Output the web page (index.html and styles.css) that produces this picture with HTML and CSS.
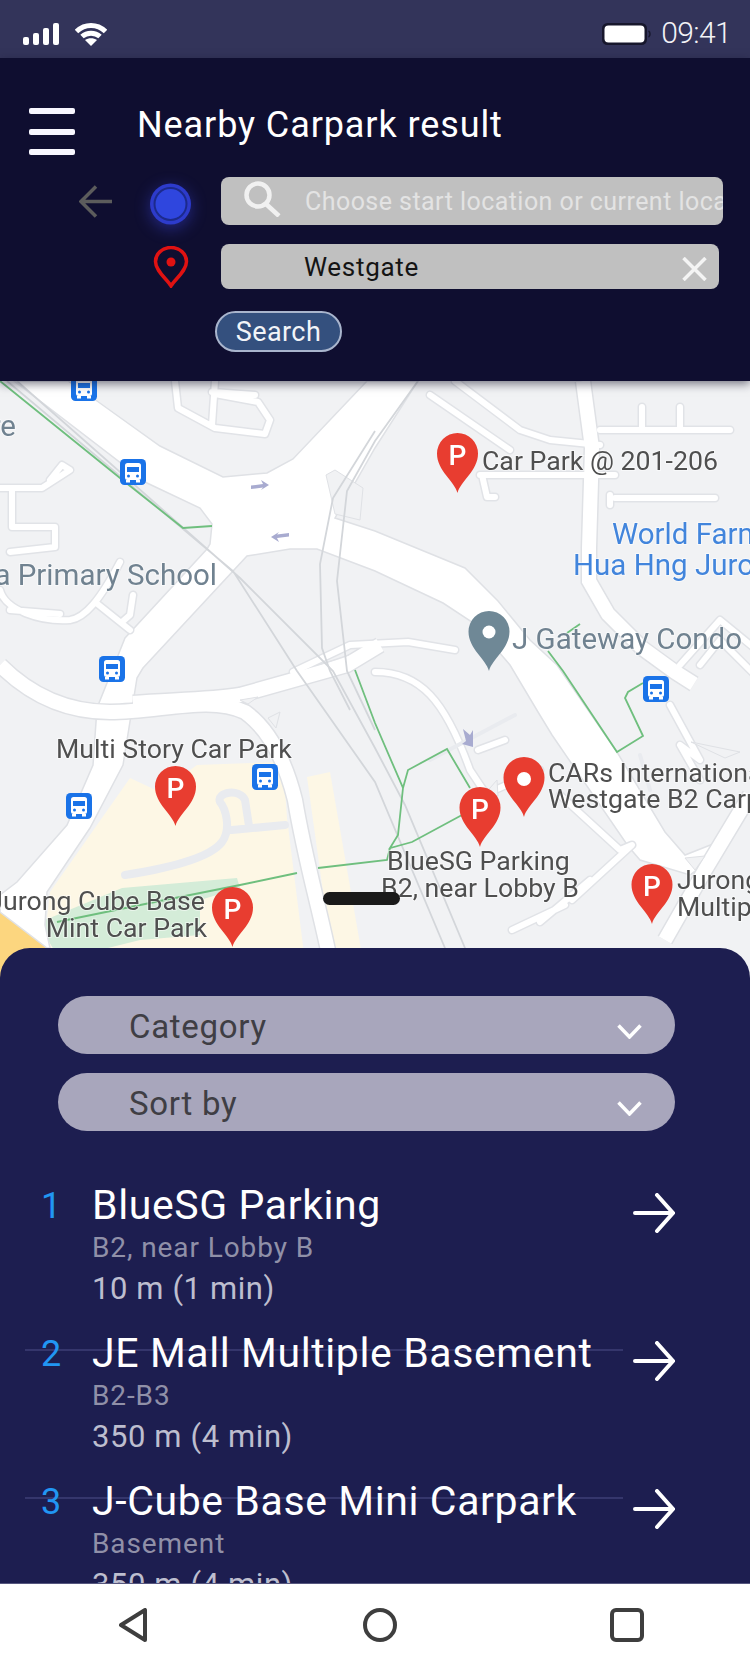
FILE: index.html
```html
<!DOCTYPE html>
<html lang="en">
<head>
<meta charset="utf-8">
<title>Nearby Carpark result</title>
<link rel="stylesheet" href="styles.css">
</head>
<body>
<div class="phone">
  <div class="status">
    <div class="status-left">
      <svg class="signal" width="36" height="22" viewBox="0 0 36 22"><rect x="0" y="14" width="6" height="8" rx="2"/><rect x="10" y="10" width="6" height="12" rx="2"/><rect x="20" y="5" width="6" height="17" rx="2"/><rect x="30" y="0" width="6" height="22" rx="2"/></svg>
      <svg class="wifi" width="32" height="23" viewBox="0 0 32 23"><path class="wifi-arc" d="M1.500 8.500C10 0.500 22 0.500 30.500 8.500"/><path class="wifi-arc" d="M7 13.500C12 9 20 9 25 13.500"/><path class="wifi-tip" d="M16 23L10 17C13.500 14.500 18.500 14.500 22 17Z"/></svg>
    </div>
    <div class="status-right">
      <svg class="battery" width="49" height="22" viewBox="0 0 49 22"><rect x="0" y="0" width="45" height="22" rx="5.500" class="batt-shell"/><rect x="2.500" y="2.500" width="40" height="17" rx="4" class="batt-level"/><path class="batt-nub" d="M46.500 8C48.500 9 48.500 13 46.500 14"/></svg>
      <span class="time">09:41</span>
    </div>
  </div>

  <header class="header">
    <div class="title-row">
      <div class="burger"><span></span><span></span><span></span></div>
      <h1 class="title">Nearby Carpark result</h1>
    </div>
    <div class="route-row route-row-start">
      <div class="back-cell">
        <svg width="34" height="33" viewBox="0 0 34 33"><path class="back-arrow" d="M33 16.500H3M17 1.500L2 16.500L17 31.500"/></svg>
      </div>
      <div class="marker-cell">
        <svg class="dot" width="41" height="42" viewBox="0 0 41 42"><circle cx="20.500" cy="21" r="20.500" class="dot-outer"/><circle cx="20.500" cy="21" r="17" class="dot-ring"/><circle cx="20.500" cy="21" r="15" class="dot-inner"/></svg>
      </div>
      <div class="field field-start">
        <svg class="mag" width="37" height="36" viewBox="0 0 37 36"><circle cx="14" cy="14" r="11.500"/><path d="M22 23L35 35"/></svg>
        <span class="placeholder">Choose start location or current location</span>
      </div>
    </div>
    <div class="route-row route-row-end">
      <div class="back-cell"></div>
      <div class="marker-cell">
        <svg class="pin-out" width="36" height="42" viewBox="0 0 36 42"><path class="pin-line" d="M18 40C14 33 2.500 25 2.500 15.500A15.500 14 0 0 1 33.500 15.500C33.500 25 22 33 18 40Z"/><circle cx="18" cy="16" r="4.500" class="pin-dot"/></svg>
      </div>
      <div class="field field-end">
        <span class="value">Westgate</span>
        <svg class="clear" width="25" height="24" viewBox="0 0 25 24"><path d="M1.500 1L23.500 23M23.500 1L1.500 23"/></svg>
      </div>
    </div>
    <div class="search-row"><button class="search-btn">Search</button></div>
  </header>

  <section class="map">
    <svg class="map-svg" width="750" height="597" viewBox="0 381 750 597">
      <defs>
        <g id="bus">
          <rect x="-13" y="-13" width="26" height="26" rx="4.500" class="bus-bg"/>
          <rect x="-8" y="-9" width="16" height="17" rx="2.500" class="bus-body"/>
          <rect x="-6" y="-5" width="12" height="5" class="bus-glass"/>
          <rect x="-7" y="8" width="4" height="2.500" class="bus-body"/>
          <rect x="3" y="8" width="4" height="2.500" class="bus-body"/>
          <circle cx="-4.500" cy="4" r="1.500" class="bus-glass"/>
          <circle cx="4.500" cy="4" r="1.500" class="bus-glass"/>
        </g>
        <path id="pin" d="M0 60C-3 48 -20.500 38 -20.500 20.500A20.500 20.500 0 1 1 20.500 20.500C20.500 38 3 48 0 60Z"/>
        <path id="dir" d="M-9 1.500L3 0L1 -4L9 1L1 6L3 3.500L-9 5Z"/>
        <g id="wide">
          <path d="M583 381L585 396L592 448L589 548L589 581L608 614L642 648L675 672L694 684"/>
          <path d="M0 665C25 690 60 712 110 712C160 712 210 695 245 712C270 730 285 760 295 800C305 860 320 910 330 960"/>
          <path d="M133 703C170 700 210 700 240 695L347 665L380 645"/>
          <path d="M750 795L705 870L665 940"/>
        </g>
        <g id="thin">
          <path d="M175 381L178 408L215 428L265 434L270 420L258 402L215 394M215 381L212 425M212 392L255 395"/>
          <path d="M0 488H42L70 470L62 465L50 480"/>
          <path d="M12 490V527H55V547L10 552M0 590C5 610 40 622 70 620C85 618 100 600 120 562M95 602L130 630M133 595L130 615L122 622M10 610L60 614"/>
          <path d="M293 672L350 645L408 642L455 650M310 672L352 658"/>
          <path d="M455 381L520 430L550 440L600 445M430 395L510 450"/>
          <path d="M600 430H730M642 407V430M680 407V430M615 498H715M480 475H615M482 475L487 497H495M610 495L610 505"/>
          <path d="M375 672C420 672 445 700 470 770L490 800M495 790L540 770M478 750L505 740"/>
          <path d="M680 665L720 620L775 665M700 665L720 640L760 680M560 795L620 850L632 845L572 900M590 880L540 922M512 930L565 905"/>
          <path d="M670 705L700 760L680 745L700 780"/>
        </g>
      </defs>

      <rect x="0" y="381" width="750" height="597" class="map-ground"/>
      <polygon class="campus" points="130,778 160,792 197,765 283,762 287,818 297,898 307,978 40,978 50,892"/>
      <polygon class="campus" points="307,777 330,772 366,978 335,978"/>
      <polygon class="park" points="45,920 122,888 237,878 240,888 200,900 200,935 140,940 60,960 45,935"/>
      <polygon class="sand" points="0,912 47,948 47,978 0,978"/>

      <polygon class="road-main" points="68,381 97,401 160,446 223,477 267,473 293,459 367,381 418,381 375,448 335,518 375,531 465,568 498,601 530,640 557,665 617,752 665,832 685,855 718,842 722,850 690,875 640,860 628,846 552,735 538,712 510,665 475,624 443,603 375,571 317,549 290,549 247,556 143,668 137,678 123,765 90,828 47,892 45,925 50,948 47,948 0,912 0,895 17,882 67,825 93,765 97,708 125,638 207,549 210,544 212,524 200,508 147,483 14,381"/>

      <use href="#wide" class="road-wide-edge"/>
      <use href="#thin" class="road-thin-edge"/>
      <use href="#wide" class="road-wide-fill"/>
      <use href="#thin" class="road-thin-fill"/>

      <polygon class="islet" points="326,475 335,470 363,488 360,520 335,514"/>
      <polygon class="islet" points="240,700 258,697 248,704"/>
      <polygon class="islet" points="268,718 280,712 276,728"/>
      <polygon class="islet" points="483,796 497,780 498,796"/>
      <polygon class="islet" points="691,742 740,752 725,758"/>
      <polygon class="islet" points="685,858 705,856 695,870"/>

      <path class="lane" d="M125 875C170 868 210 858 222 842C232 828 225 808 220 802C216 792 240 788 245 800L249 826M232 830L285 825"/>
      <path class="lane lane-small" d="M430 760L515 715M640 755L650 790"/>

      <path class="rail" d="M7 381L233 571L297 671L375 782L450 960M17 381L240 578L333 671L375 748L405 805L470 960"/>
      <path class="rail" d="M375 431L333 498L320 564L322 648L330 671L350 710M418 381L375 441L347 491L337 581L347 671L375 730"/>

      <path class="trail" d="M0 381L120 478L183 528L212 526"/>
      <path class="trail" d="M567 633L580 624M548 651L563 671L617 752L643 736L625 698L628 692L643 683"/>
      <path class="trail" d="M355 670L375 723L403 788L398 835L390 848L412 842L462 815M403 788L408 770L447 749L470 788"/>
      <path class="trail" d="M390 848L387 860L318 868M297 873L240 885L150 903L57 922"/>

      <use href="#dir" x="260" y="484" class="dir"/>
      <use href="#dir" x="280" y="538" transform="rotate(180 280 538)" class="dir"/>
      <path class="dir" d="M463 729L470 735L473 730L473 747L462 744L466 741Z"/>

      <text class="label label-gray" x="16" y="436" text-anchor="end">re</text>
      <text class="label label-gray" x="217" y="585" text-anchor="end">a Primary School</text>
      <text class="label label-blue" x="612" y="544">World Farm</text>
      <text class="label label-blue" x="573" y="575">Hua Hng Jurong</text>
      <text class="label label-gray" x="512" y="649">J Gateway Condo</text>
      <text class="label" x="482" y="470">Car Park @ 201-206</text>
      <text class="label" x="56" y="758">Multi Story Car Park</text>
      <text class="label" x="205" y="910" text-anchor="end">Jurong Cube Base</text>
      <text class="label" x="207" y="937" text-anchor="end">Mint Car Park</text>
      <text class="label" x="548" y="782">CARs International</text>
      <text class="label" x="548" y="808">Westgate B2 Carpark</text>
      <text class="label" x="387" y="870">BlueSG Parking</text>
      <text class="label" x="381" y="897">B2, near Lobby B</text>
      <text class="label" x="677" y="889">Jurong Mall</text>
      <text class="label" x="677" y="916">Multiple Basement</text>

      <use href="#bus" x="84" y="388"/>
      <use href="#bus" x="133" y="472"/>
      <use href="#bus" x="112" y="669"/>
      <use href="#bus" x="79" y="806"/>
      <use href="#bus" x="265" y="777"/>
      <use href="#bus" x="656" y="689"/>

      <use href="#pin" x="489" y="611" class="pin-gray"/>
      <circle cx="489" cy="632" r="6.500" class="pin-hole"/>
      <use href="#pin" x="457.500" y="433" class="pin-red"/>
      <text class="pin-p" x="457.500" y="465" text-anchor="middle">P</text>
      <use href="#pin" x="175.500" y="766" class="pin-red"/>
      <text class="pin-p" x="175.500" y="798" text-anchor="middle">P</text>
      <use href="#pin" x="232.500" y="887" class="pin-red"/>
      <text class="pin-p" x="232.500" y="919" text-anchor="middle">P</text>
      <use href="#pin" x="524" y="757" class="pin-red"/>
      <circle cx="524" cy="779" r="7" class="pin-hole"/>
      <use href="#pin" x="480" y="787" class="pin-red"/>
      <text class="pin-p" x="480" y="819" text-anchor="middle">P</text>
      <use href="#pin" x="652" y="864" class="pin-red"/>
      <text class="pin-p" x="652" y="896" text-anchor="middle">P</text>
    </svg>
    <div class="handle"></div>
  </section>

  <section class="panel">
    <div class="selects">
      <div class="select"><span>Category</span><svg width="25" height="15" viewBox="0 0 25 15"><path class="chev" d="M1.500 1.500L12.500 13L23.500 1.500"/></svg></div>
      <div class="select"><span>Sort by</span><svg width="25" height="15" viewBox="0 0 25 15"><path class="chev" d="M1.500 1.500L12.500 13L23.500 1.500"/></svg></div>
    </div>
    <div class="results">
      <article class="result">
        <div class="rank">1</div>
        <div class="info">
          <div class="name">BlueSG Parking</div>
          <div class="where">B2, near Lobby B</div>
          <div class="dist">10 m (1 min)</div>
        </div>
        <svg class="go" width="42" height="40" viewBox="0 0 42 40"><path d="M2 20H39M24 2L40 20L24 38"/></svg>
      </article>
      <article class="result result-ruled">
        <div class="rank">2</div>
        <div class="info">
          <div class="name">JE Mall Multiple Basement</div>
          <div class="where">B2-B3</div>
          <div class="dist">350 m (4 min)</div>
        </div>
        <svg class="go" width="42" height="40" viewBox="0 0 42 40"><path d="M2 20H39M24 2L40 20L24 38"/></svg>
      </article>
      <article class="result result-ruled">
        <div class="rank">3</div>
        <div class="info">
          <div class="name">J-Cube Base Mini Carpark</div>
          <div class="where">Basement</div>
          <div class="dist">350 m (4 min)</div>
        </div>
        <svg class="go" width="42" height="40" viewBox="0 0 42 40"><path d="M2 20H39M24 2L40 20L24 38"/></svg>
      </article>
    </div>
  </section>

  <nav class="softkeys">
    <div class="softkey"><svg width="28" height="34" viewBox="0 0 28 34"><path d="M26 2V32L2 17Z"/></svg></div>
    <div class="softkey"><svg width="34" height="34" viewBox="0 0 34 34"><circle cx="17" cy="17" r="15"/></svg></div>
    <div class="softkey"><svg width="34" height="34" viewBox="0 0 34 34"><rect x="2" y="2" width="30" height="30" rx="4"/></svg></div>
  </nav>
</div>
</body>
</html>
```

FILE: styles.css
```css
* { box-sizing: border-box; }
html, body { margin: 0; padding: 0; }
body { width: 750px; height: 1667px; overflow: hidden; font-family: Roboto, "Noto Sans", sans-serif; background: #fff; }
.phone { width: 750px; height: 1667px; display: flex; flex-direction: column; overflow: hidden; }

/* status bar */
.status { height: 58px; flex: none; background: #33345a; display: flex; justify-content: space-between; padding: 23px 19px 0 23px; }
.status-left { display: flex; gap: 16px; align-items: flex-start; }
.signal rect { fill: #fff; }
.wifi-arc { fill: none; stroke: #fff; stroke-width: 5; }
.wifi-tip { fill: #fff; }
.status-right { display: flex; gap: 10px; align-items: flex-start; }
.batt-shell { fill: #17172c; }
.batt-level { fill: #fff; }
.batt-nub { fill: none; stroke: #17172c; stroke-width: 1.5; }
.time { font-size: 30px; font-weight: 300; line-height: 20px; color: #f2f2f6; letter-spacing: -0.6px; }

/* header */
.header { height: 323px; flex: none; background: #0f0e30; padding-top: 50px; position: relative; z-index: 2; box-shadow: 0 3px 9px rgba(20,20,40,.55); }
.title-row { display: flex; align-items: flex-start; height: 47px; padding-left: 29px; margin-bottom: 22px; }
.burger { width: 46px; height: 47px; display: flex; flex-direction: column; justify-content: space-between; margin-right: 62px; }
.burger span { display: block; height: 6px; border-radius: 2px; background: #f8f7ff; }
.title { margin: -1px 0 0; font-size: 36px; font-weight: 400; line-height: 36px; color: #fff; letter-spacing: 0.9px; white-space: nowrap; }
.route-row { display: grid; grid-template-columns: 150px 71px 1fr; align-items: center; }
.route-row-start { height: 46px; margin-bottom: 21px; }
.route-row-end { height: 45px; margin-bottom: 22px; }
.back-cell { padding-left: 79px; display: flex; }
.back-arrow { fill: none; stroke: #5c5c5c; stroke-width: 3.5; }
.marker-cell { display: flex; }
.dot { margin-top: 6px; filter: drop-shadow(0 4px 8px rgba(60,70,230,.45)); overflow: visible; }
.dot-outer { fill: #2d3bcb; }
.dot-ring { fill: #1c2a8c; }
.dot-inner { fill: #2f46de; }
.pin-out { margin-left: 3px; }
.pin-line { fill: none; stroke: #e01212; stroke-width: 3.5; }
.pin-dot { fill: #e01212; }
.field { background: #c0c0c0; border-radius: 8px; height: 100%; display: flex; align-items: center; overflow: hidden; }
.field-start { width: 502px; padding-left: 23px; }
.field-end { width: 498px; padding-left: 83px; justify-content: space-between; padding-right: 12px; }
.mag { flex: none; margin-right: 24px; margin-top: -5px; }
.mag circle, .mag path { fill: none; stroke: #f1f1f1; stroke-width: 4.5; }
.placeholder { font-size: 25px; color: #e3e3e3; white-space: nowrap; letter-spacing: 0.45px; }
.value { font-size: 26px; color: #141414; letter-spacing: 0.7px; }
.clear { margin-top: 4px; }
.clear path { fill: none; stroke: #f4f4f4; stroke-width: 3.5; }
.search-row { padding-left: 215px; }
.search-btn { display: block; width: 127px; height: 41px; padding: 0; border-radius: 21px; border: 2px solid #a9b5cd; background: #34507e; color: #f2f4f8; font: 400 27px/36px Roboto, sans-serif; letter-spacing: 0.4px; }

/* map */
.map { height: 597px; flex: none; position: relative; overflow: hidden; background: #f1f3f5; }
.map-svg { display: block; filter: blur(.45px); }
.map-ground { fill: #f1f2f4; }
.campus { fill: #fdf7e5; }
.park { fill: #d4ecd8; }
.sand { fill: #fcd67f; }
.road-main { fill: #fff; stroke: #dfe1e5; stroke-width: 1.5; }
.road-wide-edge { fill: none; stroke: #dfe1e5; stroke-width: 17; }
.road-wide-fill { fill: none; stroke: #fff; stroke-width: 14; }
.road-thin-edge { fill: none; stroke: #e1e3e7; stroke-width: 9; stroke-linecap: round; stroke-linejoin: round; }
.road-thin-fill { fill: none; stroke: #fff; stroke-width: 6; stroke-linecap: round; stroke-linejoin: round; }
.islet { fill: #f1f2f4; stroke: #dfe1e5; stroke-width: 1; }
.lane { fill: none; stroke: #e9ebef; stroke-width: 8; stroke-linecap: round; stroke-linejoin: round; }
.lane-small { stroke-width: 4; }
.rail { fill: none; stroke: #d3d6da; stroke-width: 1.8; }
.trail { fill: none; stroke: #6fbf7e; stroke-width: 1.8; }
.dir { fill: #a8abd0; }
.bus-bg { fill: #1a73e8; }
.bus-body { fill: #fff; }
.bus-glass { fill: #1a73e8; }
.label { font-family: Roboto, sans-serif; font-size: 26.700px; fill: #4f4f4f; paint-order: stroke; stroke: rgba(255,255,255,.5); stroke-width: 2px; }
.label-gray { fill: #708290; font-size: 29.500px; }
.label-blue { fill: #4285dc; font-size: 29.500px; }
.pin-red { fill: #e83d30; }
.pin-gray { fill: #6f8896; }
.pin-hole { fill: #fff; }
.pin-p { font-family: Roboto, sans-serif; font-size: 28px; font-weight: 500; fill: #fff; }
.handle { position: absolute; left: 323px; top: 511px; width: 77px; height: 13px; border-radius: 7px; background: #1a1a1a; }

/* bottom panel */
.panel { height: 665px; flex: none; margin-top: -30px; position: relative; z-index: 1; background: #1d1e50; border-radius: 30px 30px 0 0; padding-top: 48px; overflow: hidden; margin-bottom: -30px; }
.selects { margin-left: 58px; width: 617px; display: flex; flex-direction: column; gap: 19px; margin-bottom: 49px; }
.select { height: 58px; border-radius: 29px; background: #a8a6bc; display: flex; align-items: center; justify-content: space-between; padding: 2px 33px 0 71px; font-size: 33px; color: #3f3e44; letter-spacing: 0.7px; }
.select svg { margin-top: 10px; }
.chev { fill: none; stroke: #fff; stroke-width: 3.5; }
.results { display: flex; flex-direction: column; }
.result { height: 148px; flex: none; position: relative; display: flex; padding-left: 41px; }
.result-ruled::before { content: ""; position: absolute; left: 25px; top: 21px; width: 598px; height: 2px; background: #35366c; }
.rank { width: 51px; flex: none; font-size: 36px; font-weight: 400; line-height: 46px; color: #2196f3; position: relative; padding-top: 3px; }
.info { flex: 1; position: relative; padding-top: 2px; }
.name { font-size: 41px; line-height: 46px; color: #fff; letter-spacing: 0.6px; white-space: nowrap; }
.where { font-size: 28px; line-height: 33px; color: #9090a8; letter-spacing: 0.9px; margin-top: 3px; }
.dist { font-size: 31px; line-height: 40px; margin-top: 5px; color: #bdbecf; letter-spacing: 0.6px; }
.go { position: relative; flex: none; margin: 13px 75px 0 0; }
.go path { fill: none; stroke: #fff; stroke-width: 4; stroke-linecap: round; }

/* soft keys */
.softkeys { height: 84px; flex: none; position: relative; z-index: 3; background: #fff; border-top: 1px solid #56577f; padding: 0 0 0 9px; display: grid; grid-template-columns: repeat(3, 1fr); }
.softkey { display: flex; align-items: center; justify-content: center; padding-bottom: 1px; }
.softkey path, .softkey circle, .softkey rect { fill: none; stroke: #3e3e3e; stroke-width: 4; stroke-linejoin: round; }
```
